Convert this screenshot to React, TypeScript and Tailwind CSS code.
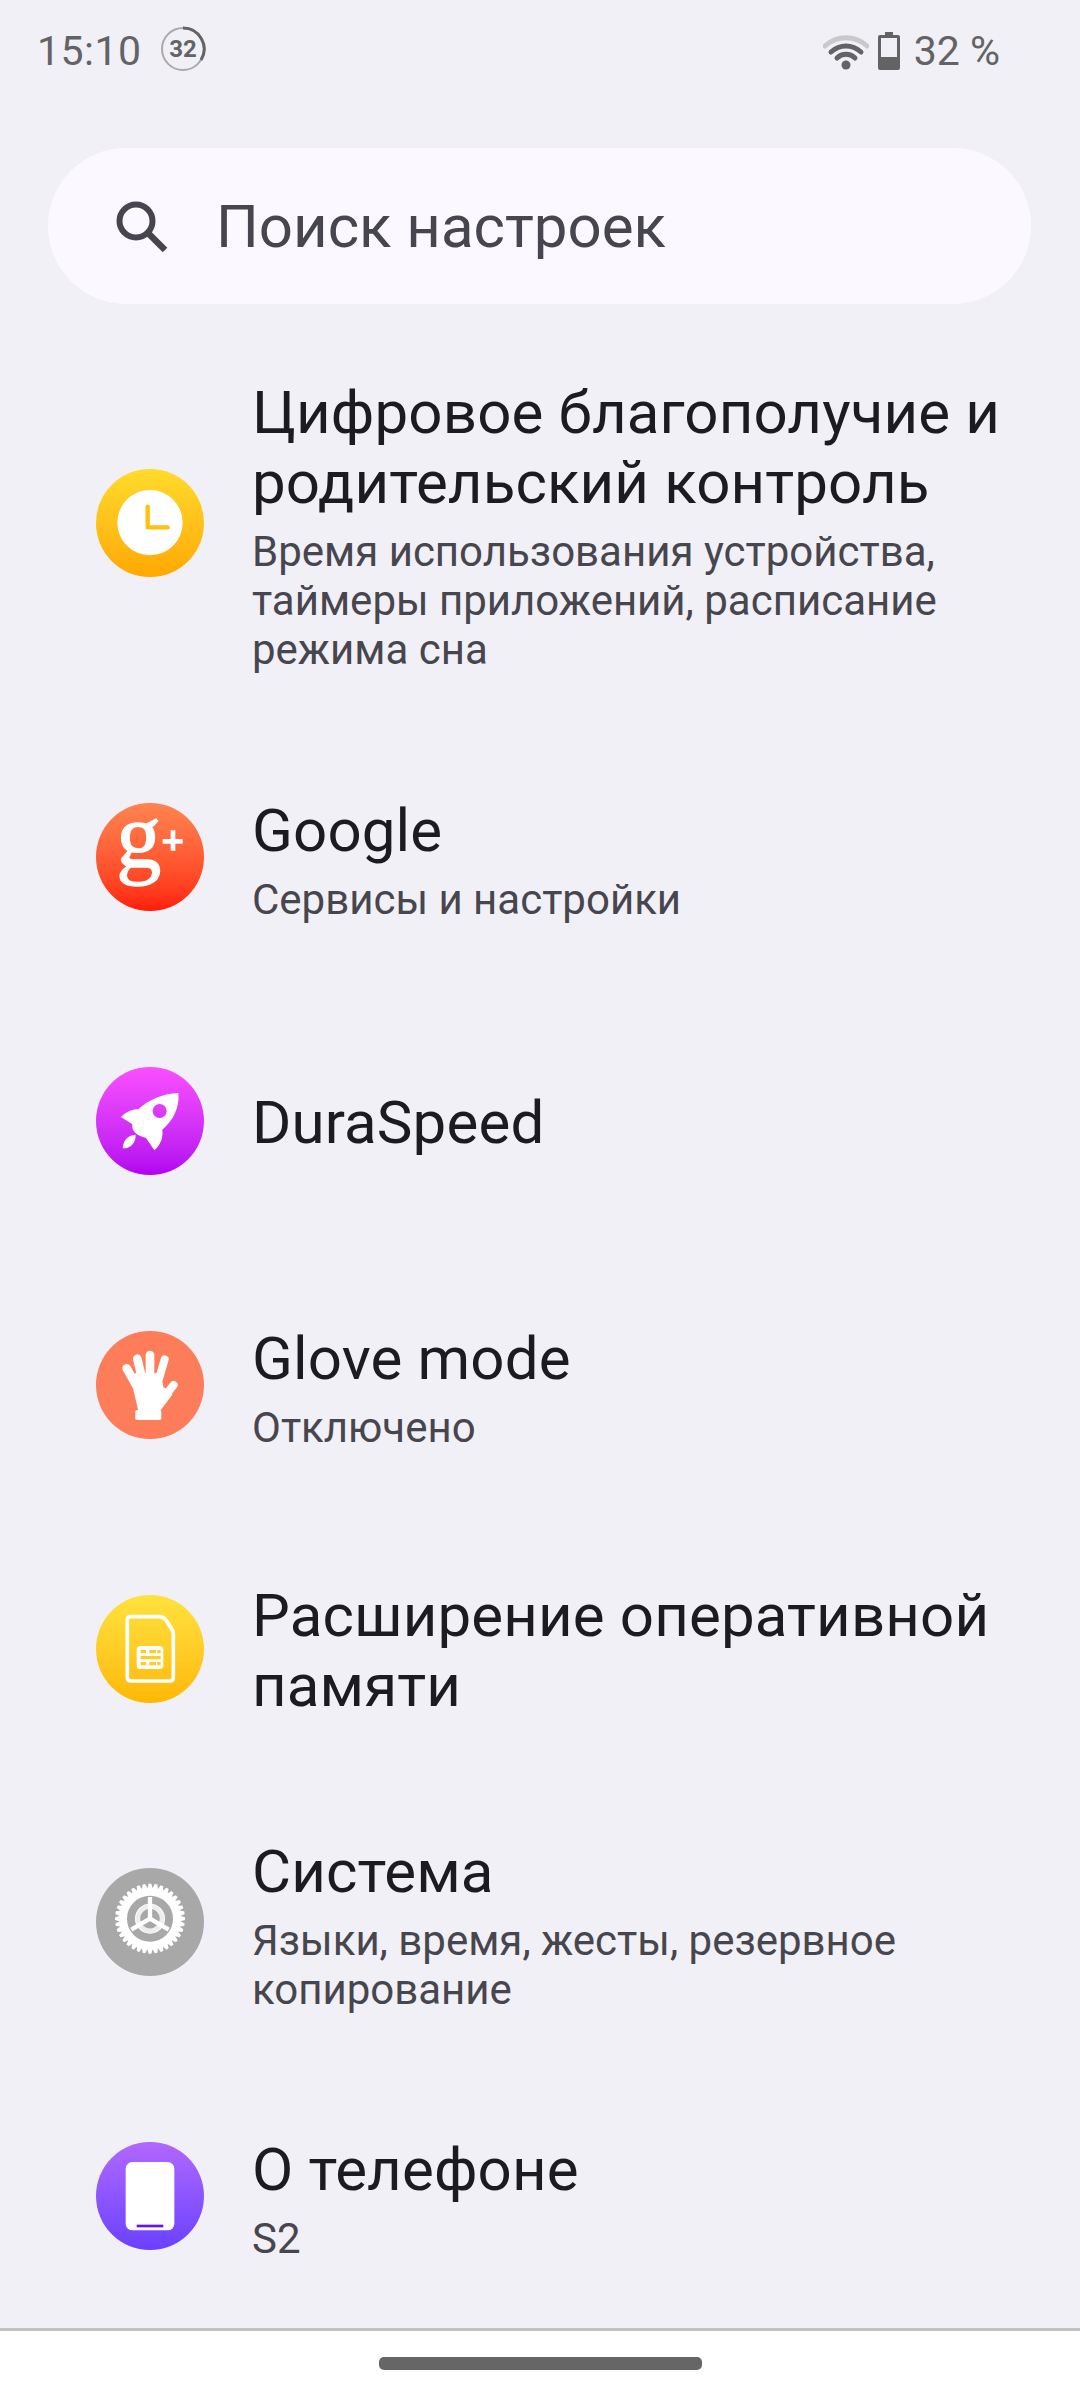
import type { ReactNode } from 'react';

interface Row {
  title: string;
  sub?: string;
  height: string;
  iconBg: string;
  icon: ReactNode;
}

function gearPath(): string {
  const teeth = 36;
  const pts: string[] = [];
  for (let i = 0; i < teeth; i++) {
    const step = (Math.PI * 2) / teeth;
    const a = i * step;
    const corners: [number, number][] = [
      [a - step * 0.5, 92],
      [a - step * 0.22, 105],
      [a + step * 0.22, 105],
    ];
    for (const [ang, r] of corners) {
      pts.push(`${(240 + Math.cos(ang) * r).toFixed(1)} ${(237 + Math.sin(ang) * r).toFixed(1)}`);
    }
  }
  return `M${pts.join('L')}Z`;
}

function IconSvg({ box, children }: { box: string; children: ReactNode }) {
  return (
    <svg viewBox={box} className="w-[108px] h-[108px] block overflow-visible">
      {children}
    </svg>
  );
}

const ROWS: Row[] = [
  {
    title: 'Цифровое благополучие и родительский контроль',
    sub: 'Время использования устройства, таймеры приложений, расписание режима сна',
    height: 'h-[414px]',
    iconBg: 'bg-linear-to-b from-[#ffdb2a] to-[#ffa800]',
    icon: (
      <IconSvg box="78 87 324 324">
        <circle cx="240" cy="248" r="98" fill="#fff" />
        <path d="M233 200V262H293" fill="none" stroke="#ffc012" strokeWidth="13" strokeLinecap="round" strokeLinejoin="round" />
      </IconSvg>
    ),
  },
  {
    title: 'Google',
    sub: 'Сервисы и настройки',
    height: 'h-[254px]',
    iconBg: 'bg-linear-to-b from-[#ff8350] to-[#ff1a08]',
    icon: (
      <IconSvg box="78 70 324 324">
        <text x="139" y="261" fill="#fff" stroke="#fff" strokeWidth="4" fontSize="270" className="font-['Liberation_Serif',serif]">
          g
        </text>
        <path d="M278 178H338V192H278ZM302 152H316V213H302Z" fill="#fff" />
      </IconSvg>
    ),
  },
  {
    title: 'DuraSpeed',
    height: 'h-[274px]',
    iconBg: 'bg-linear-to-b from-[#fb4eff] to-[#b300f0]',
    icon: (
      <IconSvg box="78 80 324 324">
        <path
          fillRule="evenodd"
          d="M325 158C280 160 240 175 205 207C185 207 168 215 153 230L187 252C185 270 195 285 228 293L253 330C270 315 280 295 277 268C310 240 330 200 325 158ZM290 212A21 21 0 1 1 248 212A21 21 0 1 1 290 212Z"
          fill="#fff"
        />
        <path d="M197 283C172 285 160 300 158 324C180 325 197 310 197 283Z" fill="#fff" />
      </IconSvg>
    ),
  },
  {
    title: 'Glove mode',
    sub: 'Отключено',
    height: 'h-[254px]',
    iconBg: 'bg-[#fd7d5a]',
    icon: (
      <IconSvg box="78 78 324 324">
        <g stroke="#fff" strokeLinecap="round" fill="none">
          <path d="M170 190L198 240" strokeWidth="26" />
          <path d="M202 161L216 220" strokeWidth="26" />
          <path d="M240 150V220" strokeWidth="26" />
          <path d="M284 163L266 225" strokeWidth="24" />
          <path d="M311 240L275 285" strokeWidth="24" />
        </g>
        <path d="M184 228L205 318H270L308 268L280 245L272 205L190 205Z" fill="#fff" />
        <rect x="196" y="315" width="78" height="30" rx="5" fill="#fff" />
      </IconSvg>
    ),
  },
  {
    title: 'Расширение оперативной памяти',
    height: 'h-[274px]',
    iconBg: 'bg-linear-to-b from-[#ffe23c] to-[#ffb800]',
    icon: (
      <IconSvg box="78 75 324 324">
        <path
          d="M182 140H268Q280 140 288 150L304 175Q310 183 310 192V322Q310 333 300 333H182Q172 333 172 322V150Q172 140 182 140Z"
          fill="none"
          stroke="#fff"
          strokeWidth="11"
        />
        <rect x="200" y="228" width="80" height="69" rx="11" fill="#fff" />
        <path d="M212 240H228V250H212ZM238 240H258V250H238ZM262 240H272V250H262ZM212 258H272V268H212ZM212 276H228V286H212ZM238 276H258V286H238ZM262 276H272V286H262Z" fill="#ffcd20" />
      </IconSvg>
    ),
  },
  {
    title: 'Система',
    sub: 'Языки, время, жесты, резервное копирование',
    height: 'h-[272px]',
    iconBg: 'bg-[#a8a8a8]',
    icon: (
      <IconSvg box="78 85 324 324">
        <path d={gearPath()} fill="#fff" />
        <circle cx="240" cy="237" r="57" fill="none" stroke="#a8a8a8" strokeWidth="24" />
        <circle cx="240" cy="237" r="38" fill="#a8a8a8" />
        <circle cx="240" cy="237" r="36" fill="none" stroke="#eeeeee" strokeWidth="13" />
        <path d="M240 237V172M240 237L184 270M240 237L296 270" stroke="#fff" strokeWidth="13" fill="none" />
      </IconSvg>
    ),
  },
  {
    title: 'О телефоне',
    sub: 'S2',
    height: 'h-[276px]',
    iconBg: 'bg-linear-to-b from-[#b266ff] to-[#6a3fff]',
    icon: (
      <IconSvg box="78 80 324 324">
        <rect x="167" y="140" width="146" height="205" rx="20" fill="#fff" />
        <rect x="200" y="328" width="80" height="8" fill="#6a11e8" />
      </IconSvg>
    ),
  },
];

function StatusBar() {
  return (
    <div className="h-[102px] flex items-center justify-between pl-[37px] pr-[80px] text-[41px] text-[#636366] shrink-0">
      <div className="flex items-center gap-[18px]">
        <span className="pt-[2px] tracking-[0.5px]">15:10</span>
        <svg viewBox="0 0 46 46" className="w-[46px] h-[46px] mb-[4px]">
          <circle cx="23" cy="23" r="21" fill="none" stroke="#a9a9ad" strokeWidth="2" />
          <path d="M23 2A21 21 0 0 1 41 34" fill="none" stroke="#636366" strokeWidth="3" />
          <text x="23" y="31" textAnchor="middle" fontSize="24" fontWeight="700" fontFamily="Roboto, sans-serif" fill="#636366">
            32
          </text>
        </svg>
      </div>
      <div className="flex items-center">
        <svg viewBox="0 0 46 38" className="w-[46px] h-[38px]">
          <path d="M2 14C14 3 32 3 44 14" fill="none" stroke="#c9c9cb" strokeWidth="5" strokeLinecap="round" />
          <path d="M8 20C17 12 29 12 38 20" fill="none" stroke="#636366" strokeWidth="5" strokeLinecap="round" />
          <path d="M14 26C19 21 27 21 32 26" fill="none" stroke="#636366" strokeWidth="5" strokeLinecap="round" />
          <circle cx="23" cy="33" r="4.5" fill="#636366" />
        </svg>
        <svg viewBox="0 0 24 38" className="w-[24px] h-[38px] ml-[8px]">
          <path d="M8 0H16V3H21Q23 3 23 5V36Q23 38 21 38H3Q1 38 1 36V5Q1 3 3 3H8Z" fill="#636366" />
          <rect x="4" y="6" width="16" height="19" fill="#f1f0f6" />
        </svg>
        <span className="ml-[13px] pt-[2px]">32 %</span>
      </div>
    </div>
  );
}

export default function App() {
  return (
    <div className="w-[1080px] h-[2400px] flex flex-col bg-[#f1f0f6] font-['Roboto',sans-serif] overflow-hidden">
      <StatusBar />
      <div className="shrink-0 mt-[46px] mx-[48px] w-[983px] h-[156px] rounded-full bg-[#fbf9ff] flex items-center pl-[66px] text-[#47464f]">
        <svg viewBox="0 0 54 54" className="w-[54px] h-[54px] shrink-0">
          <circle cx="22" cy="22" r="16.5" fill="none" stroke="#47464f" strokeWidth="6" />
          <path d="M34 34L51 51" stroke="#47464f" strokeWidth="6.5" />
        </svg>
        <span className="ml-[48px] pt-[2px] text-[60px] leading-none">Поиск настроек</span>
      </div>
      <div className="flex-1 min-h-0 mt-[12px] overflow-hidden">
        {ROWS.map((row) => (
          <div key={row.title} className={`flex items-center gap-[48px] pl-[96px] pr-[48px] ${row.height}`}>
            <div className={`w-[108px] h-[108px] rounded-full shrink-0 ${row.iconBg}`}>{row.icon}</div>
            <div className={`min-w-0 ${row.sub ? 'pt-[6px]' : 'pt-[3px]'}`}>
              <div className="text-[60px] leading-[70px] tracking-[0.15px] text-[#1c1b20]">{row.title}</div>
              {row.sub && <div className="mt-[9px] text-[42px] leading-[49px] text-[#47464f]">{row.sub}</div>}
            </div>
          </div>
        ))}
      </div>
      <div className="shrink-0 h-[72px] bg-white border-t-[3px] border-[#c4c0c8] flex justify-center pt-[26px]">
        <div className="w-[323px] h-[13px] rounded-[5px] bg-[#666666]" />
      </div>
    </div>
  );
}
